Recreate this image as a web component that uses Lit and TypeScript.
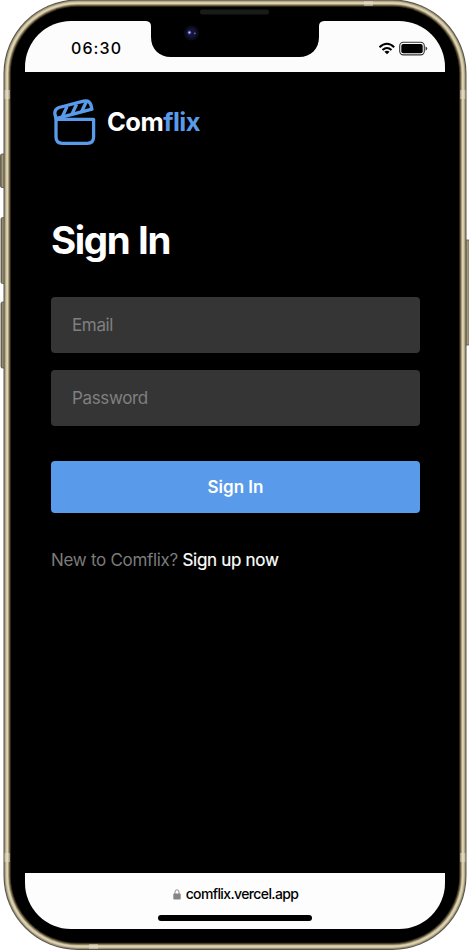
import { LitElement, html, css, svg } from "lit";
import { customElement } from "lit/decorators.js";

@customElement("status-bar")
class StatusBar extends LitElement {
  static styles = css`
    :host { display: flex; height: 51px; flex: none; justify-content: space-between; background: #fcfcfc; color: #000; position: relative; box-sizing: border-box; }
    .time { font: 500 16px/20px Inter, sans-serif; letter-spacing: 1.1px; margin: 17px 0 0 46px; }
    .notch { position: absolute; left: 119px; top: 0; }
    .icons { display: block; margin: 20px 17px 0 0; }
  `;
  render() {
    return html`
      <span class="time">06:30</span>
      <svg class="notch" width="182" height="37" viewBox="0 0 182 37">
        <path d="M2 0H180Q175 .5 175 5V16C175 28 167 36 155 36H27C15 36 7 28 7 16V5Q7 .5 2 0Z" fill="#000" />
        <circle cx="47.500" cy="12" r="7.500" fill="#0b0b19" />
        <circle cx="47.500" cy="12" r="5" fill="#14143a" />
        <circle cx="45.500" cy="11.500" r="1.900" fill="#3d459b" />
        <circle cx="45.400" cy="11.500" r="1" fill="#c4cbf5" />
        <circle cx="50.800" cy="12.300" r=".9" fill="#6870ae" />
      </svg>
      <svg class="icons" width="50" height="16" viewBox="0 0 50 16">
        <g fill="none" stroke="#000" stroke-width="2">
          <path d="M1.500 6.200Q9 -.6 16.200 6.200" />
          <path d="M4.500 9Q9 4.900 13.500 9" />
        </g>
        <path d="M6.400 10.700Q9 8.700 11.600 10.700L9 13.200Z" />
        <rect x="21.700" y="1.300" width="24.600" height="12.600" rx="3.600" fill="none" stroke="#333" stroke-width="1.100" />
        <rect x="23.300" y="2.900" width="21.400" height="9.400" rx="2" />
        <path d="M47.500 5.500Q49.300 6.200 49.300 7.600T47.500 9.700Z" fill="#444" />
      </svg>`;
  }
}

@customElement("brand-logo")
class BrandLogo extends LitElement {
  static styles = css`
    :host { display: flex; align-items: center; height: 50px; gap: 10px; }
    .name { font: 700 25.500px/32px Inter, sans-serif; letter-spacing: -0.500px; color: #fff; margin-top: -2px; }
    .accent { color: #5a9aeb; }
  `;
  render() {
    return html`
      <svg width="46" height="50" viewBox="0 0 46 50" fill="none" stroke="#5a9aeb" stroke-width="3.300" stroke-linejoin="round">
        <path d="M5 21.300H42.600V39Q42.600 45.300 36.300 45.300H11.300Q5 45.300 5 39Z" />
        <path d="M5 20.700L3.900 16Q3.300 11.400 8 9.500L32.500 3.200Q38 1.800 39.800 6.500L40.900 11.200Z" />
        <path d="M11.200 19L16 8.600M20.800 16.500L25.600 6.200M30.400 14L35.200 4" />
      </svg>
      <span class="name">Com<span class="accent">flix</span></span>`;
  }
}

@customElement("sign-in-form")
class SignInForm extends LitElement {
  static styles = css`
    :host { display: block; font-family: Inter, sans-serif; }
    .title { margin: 0 0 32px; font-size: 38.500px; line-height: 50px; font-weight: 700; letter-spacing: -1.400px; word-spacing: 1px; color: #fff; }
    .field { display: block; box-sizing: border-box; width: 100%; height: 56px; margin: 0 0 17px; padding: 0 21px; border: 0; border-radius: 4px; background: #353535; font: 400 17px Inter, sans-serif; letter-spacing: -0.350px; color: #fff; }
    .field::placeholder { color: #808080; opacity: 1; }
    .submit { display: block; width: 100%; height: 52px; margin: 35px 0 0; padding: 0; border: 0; border-radius: 4px; background: #5a9aeb; color: #fff; font: 600 17px Inter, sans-serif; letter-spacing: 0; }
    .hint { margin: 35px 0 0; font-size: 17px; line-height: 24px; letter-spacing: -0.300px; color: #7b7b7b; white-space: nowrap; }
    .link { color: #fff; -webkit-text-stroke: 0.2px #fff; }
  `;
  render() {
    return html`
      <h1 class="title">Sign In</h1>
      <input class="field" type="email" placeholder="Email" />
      <input class="field" type="password" placeholder="Password" />
      <button class="submit">Sign In</button>
      <p class="hint">New to Comflix? <span class="link">Sign up now</span></p>`;
  }
}

@customElement("browser-bar")
class BrowserBar extends LitElement {
  static styles = css`
    :host { display: flex; flex-direction: column; align-items: center; flex: none; height: 56px; background: #fdfdfd; }
    .address { display: flex; align-items: center; gap: 5px; height: 20px; margin: 11px 0 0 1px; font: 500 14px/20px Inter, sans-serif; letter-spacing: -0.620px; color: #000; }
    .home { width: 154px; height: 6px; margin-top: 11px; border-radius: 3px; background: #000; }
  `;
  render() {
    return html`
      <div class="address">
        <svg width="8" height="11" viewBox="0 0 8 11"><path d="M2 5V3Q2 .8 4 .8T6 3V5" fill="none" stroke="#929292" /><rect x=".3" y="4.600" width="7.400" height="6" rx="1" fill="#858585" /></svg>
        <span>comflix.vercel.app</span>
      </div>
      <div class="home"></div>`;
  }
}

const bands: [number, string][] = [
  [0, "#56534a"], [1, "#9b9176"], [2, "#cdc29d"], [3, "#ddd4b6"], [4.500, "#b9ad86"], [5.300, "#756a50"], [6.300, "#39301f"], [7.300, "#000"],
];
const buttons: [number, number, number][] = [[0, 154, 33.500], [0.5, 217.500, 66], [0.5, 302, 66], [464.500, 240, 105]];

@customElement("app-root")
class AppRoot extends LitElement {
  static styles = css`
    :host { display: block; position: relative; width: 469px; height: 950px; overflow: hidden; background: #fff; }
    .device { position: absolute; inset: 0; }
    .screen { position: relative; display: flex; flex-direction: column; box-sizing: border-box; width: 420px; height: 908px; margin: 21px 0 0 25px; border-radius: 46px; overflow: hidden; background: #000; }
    :host::before { content: ""; display: table; }
    .content { flex: 1; padding: 25.500px 25px 0 26px; }
    sign-in-form { margin-top: 67.500px; }
  `;
  render() {
    return html`
      <svg class="device" width="469" height="950" viewBox="0 0 469 950">
        <defs>
          <linearGradient id="key"><stop stop-color="#625c49" /><stop offset=".45" stop-color="#aaa07e" /><stop offset="1" stop-color="#756b50" /></linearGradient>
        </defs>
        ${buttons.map(([x, y, h]) => svg`<rect x=${x + 0.5} y=${y} width="5" height=${h} rx="1.500" fill="url(#key)" stroke="#555043" stroke-width=".8" />`)}
        ${bands.map(([d, c]) => svg`<rect x=${3.5 + d} y=${-0.5 + d} width=${463 - 2 * d} height=${950.5 - 2 * d} rx=${74 - d} fill=${c} />`)}
        <g fill="#e9e4d1" opacity=".45">
          <rect x="364" y="1" width="9" height="5" /><rect x="89" y="944" width="9" height="5" />
          <rect x="4.500" y="90" width="5.500" height="9" /><rect x="4.500" y="853" width="5.500" height="9" />
          <rect x="460" y="90" width="5.500" height="9" /><rect x="460" y="853" width="5.500" height="9" />
        </g>
        <rect x="200" y="9.500" width="69" height="5" rx="2" fill="#191b1a" />
      </svg>
      <main class="screen">
        <status-bar></status-bar>
        <section class="content">
          <brand-logo></brand-logo>
          <sign-in-form></sign-in-form>
        </section>
        <browser-bar></browser-bar>
      </main>`;
  }
}
